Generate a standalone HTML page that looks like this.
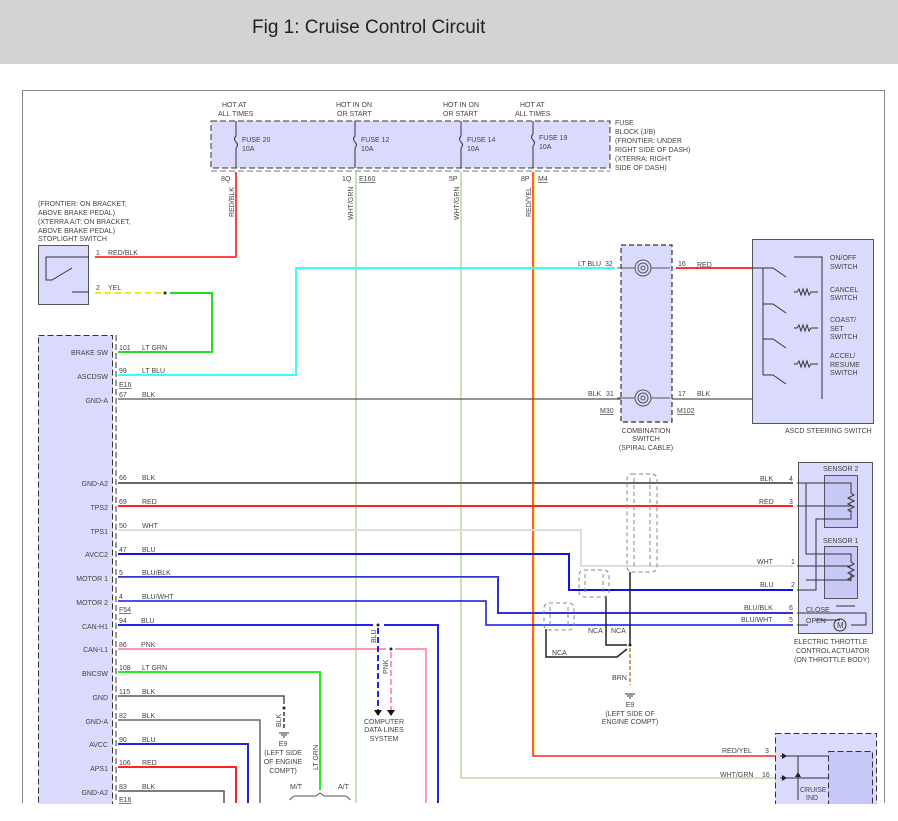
<!DOCTYPE html>
<html><head><meta charset="utf-8"><style>
html,body{margin:0;padding:0;background:#fff;width:898px;height:821px;overflow:hidden}
.hdr{position:absolute;left:0;top:0;width:898px;height:64px;background:#d3d3d3}
.hdr span{position:absolute;left:252px;top:17px;font-family:"Liberation Sans",sans-serif;font-size:19px;color:#222}
svg{position:absolute;left:0;top:0}
text{font-family:"Liberation Sans",sans-serif;font-size:7px;fill:#444}
</style></head><body>
<div class="hdr"><span>Fig 1: Cruise Control Circuit</span></div>
<svg width="898" height="821" viewBox="0 0 898 821">
<path d="M22.5 803V90.5H884.5V803" fill="none" stroke="#888" stroke-width="1"/>
<rect x="211" y="121" width="399" height="47" fill="#dadafc" stroke="#333" stroke-dasharray="6,3"/>
<path d="M211 171H610" stroke="#777" stroke-dasharray="6,3"/>
<g stroke="#333" fill="none">
<path d="M236 121V136q-3 3 0 6q3 3 0 6V168"/>
<path d="M355 121V136q-3 3 0 6q3 3 0 6V168"/>
<path d="M461 121V136q-3 3 0 6q3 3 0 6V168"/>
<path d="M533 121V134q-3 3 0 6q3 3 0 6V168"/>
</g>
<g>
<text x="222" y="107">HOT AT</text><text x="218" y="116">ALL TIMES</text>
<text x="336" y="107">HOT IN ON</text><text x="337" y="116">OR START</text>
<text x="443" y="107">HOT IN ON</text><text x="443" y="116">OR START</text>
<text x="520" y="107">HOT AT</text><text x="515" y="116">ALL TIMES</text>
<text x="242" y="142">FUSE 20</text><text x="242" y="151">10A</text>
<text x="361" y="142">FUSE 12</text><text x="361" y="151">10A</text>
<text x="467" y="142">FUSE 14</text><text x="467" y="151">10A</text>
<text x="539" y="140">FUSE 19</text><text x="539" y="149">10A</text>
<text x="615" y="125">FUSE</text><text x="615" y="134">BLOCK (J/B)</text><text x="615" y="143">(FRONTIER: UNDER</text><text x="615" y="152">RIGHT SIDE OF DASH)</text><text x="615" y="161">(XTERRA: RIGHT</text><text x="615" y="170">SIDE OF DASH)</text>
<text x="221" y="181">8Q</text><text x="342" y="181">1Q</text><text x="359" y="181" text-decoration="underline">E160</text>
<text x="449" y="181">5P</text><text x="521" y="181">8P</text><text x="538" y="181" text-decoration="underline">M4</text>
<text transform="translate(234,217) rotate(-90)">RED/BLK</text>
<text transform="translate(353,220) rotate(-90)">WHT/GRN</text>
<text transform="translate(459,220) rotate(-90)">WHT/GRN</text>
<text transform="translate(531,217) rotate(-90)">RED/YEL</text>
</g>
<path d="M236 172V257H95" stroke="#f44" stroke-width="2" fill="none"/>
<path d="M356 172V803" stroke="#c4e0b4" stroke-width="2"/>
<path d="M461 172V778H775" stroke="#b8d8a0" stroke-width="1.5" fill="none"/>
<path d="M533 172V756H775" stroke="#f22" stroke-width="1.5" fill="none"/>
<path d="M534.5 172V755" stroke="#ee6" stroke-width="1"/>
<text x="38" y="206">(FRONTIER: ON BRACKET,</text><text x="38" y="215">ABOVE BRAKE PEDAL)</text><text x="38" y="224">(XTERRA A/T: ON BRACKET,</text><text x="38" y="233">ABOVE BRAKE PEDAL)</text><text x="38" y="241">STOPLIGHT SWITCH</text>
<rect x="38.5" y="245.5" width="50" height="59" fill="#dadafc" stroke="#555"/>
<path d="M89 257H46V280H52L72 268M72 292H89" stroke="#333" fill="none"/>
<text x="96" y="255">1</text><text x="108" y="255">RED/BLK</text>
<text x="96" y="290">2</text><text x="108" y="290">YEL</text>
<path d="M95 293H163" stroke="#ee0" stroke-width="2" stroke-dasharray="6,4"/>
<circle cx="165" cy="293" r="1.5" fill="#222"/>
<path d="M170 293H212V352H118" stroke="#2d2" stroke-width="2" fill="none"/>
<rect x="38.5" y="335.5" width="74" height="470" fill="#dadafc" stroke="#333" stroke-dasharray="6,3"/>
<path d="M116 335V803" stroke="#333" stroke-dasharray="6,3"/>
<g text-anchor="end">
<text x="108" y="355">BRAKE SW</text><text x="108" y="379">ASCDSW</text><text x="108" y="403">GND-A</text>
<text x="108" y="486">GND-A2</text><text x="108" y="510">TPS2</text><text x="108" y="534">TPS1</text><text x="108" y="557">AVCC2</text>
<text x="108" y="581">MOTOR 1</text><text x="108" y="605">MOTOR 2</text><text x="108" y="629">CAN-H1</text><text x="108" y="652">CAN-L1</text>
<text x="108" y="676">BNCSW</text><text x="108" y="700">GND</text><text x="108" y="724">GND-A</text><text x="108" y="747">AVCC</text>
<text x="108" y="771">APS1</text><text x="108" y="795">GND-A2</text>
</g>
<g>
<text x="119" y="350">101</text><text x="142" y="350">LT GRN</text>
<text x="119" y="373">99</text><text x="142" y="373">LT BLU</text><text x="119" y="387" text-decoration="underline">E16</text>
<text x="119" y="397">67</text><text x="142" y="397">BLK</text>
<text x="119" y="480">66</text><text x="142" y="480">BLK</text>
<text x="119" y="504">69</text><text x="142" y="504">RED</text>
<text x="119" y="528">50</text><text x="142" y="528">WHT</text>
<text x="119" y="552">47</text><text x="142" y="552">BLU</text>
<text x="119" y="575">5</text><text x="142" y="575">BLU/BLK</text>
<text x="119" y="599">4</text><text x="142" y="599">BLU/WHT</text><text x="119" y="612" text-decoration="underline">F54</text>
<text x="119" y="623">94</text><text x="141" y="623">BLU</text>
<text x="119" y="647">86</text><text x="141" y="647">PNK</text>
<text x="119" y="670">108</text><text x="142" y="670">LT GRN</text>
<text x="119" y="694">115</text><text x="142" y="694">BLK</text>
<text x="119" y="718">82</text><text x="142" y="718">BLK</text>
<text x="119" y="742">90</text><text x="142" y="742">BLU</text>
<text x="119" y="765">106</text><text x="142" y="765">RED</text>
<text x="119" y="789">83</text><text x="142" y="789">BLK</text><text x="119" y="802" text-decoration="underline">E16</text>
</g>
<path d="M118 375H296V268H615" stroke="#3ff" stroke-width="2" fill="none"/>
<path d="M118 399H822V257H800" stroke="#555" stroke-width="1.2" fill="none"/>
<path d="M118 483H793" stroke="#666" stroke-width="2"/>
<path d="M118 506H793" stroke="#f22" stroke-width="2"/>
<path d="M118 530H581V566H793" stroke="#ddd" stroke-width="2" fill="none"/>
<path d="M118 554H569V590H793" stroke="#11e" stroke-width="2" fill="none"/>
<path d="M118 577H498V613H793" stroke="#33c" stroke-width="2" fill="none"/>
<path d="M118 577.5H498" stroke="#99f" stroke-width="0.6"/>
<path d="M118 601H486V625H793" stroke="#11e" stroke-width="1.5" fill="none"/>
<path d="M118 625H373M384 625H438V803" stroke="#22e" stroke-width="2" fill="none"/>
<path d="M118 649H386M395 649H426V803" stroke="#f9a" stroke-width="2" fill="none"/>
<circle cx="378" cy="625" r="1.5" fill="#222"/><circle cx="391" cy="649" r="1.5" fill="#222"/>
<path d="M378 628V710" stroke="#22e" stroke-width="2" stroke-dasharray="6,3"/>
<path d="M391 652V710" stroke="#f9a" stroke-width="2" stroke-dasharray="6,3"/>
<path d="M374 710h8l-4 6zM387 710h8l-4 6z" fill="#111"/>
<text transform="translate(376,643) rotate(-90)">BLU</text>
<text transform="translate(388,674) rotate(-90)">PNK</text>
<text x="384" y="724" text-anchor="middle">COMPUTER</text><text x="384" y="732" text-anchor="middle">DATA LINES</text><text x="384" y="741" text-anchor="middle">SYSTEM</text>
<path d="M118 672H320V790" stroke="#2e2" stroke-width="2" fill="none"/>
<text transform="translate(318,770) rotate(-90)">LT GRN</text>
<path d="M118 696H284V704" stroke="#555" stroke-width="1.5" fill="none"/>
<circle cx="284" cy="708" r="1.5" fill="#222"/>
<path d="M284 712V730" stroke="#333" stroke-width="1.5" stroke-dasharray="4,2"/>
<path d="M279 733h10M281 735h6M283 737h2" stroke="#333"/>
<text transform="translate(281,727) rotate(-90)">BLK</text>
<text x="283" y="746" text-anchor="middle">E9</text><text x="283" y="755" text-anchor="middle">(LEFT SIDE</text><text x="283" y="764" text-anchor="middle">OF ENGINE</text><text x="283" y="773" text-anchor="middle">COMPT)</text>
<path d="M118 720H260V803" stroke="#666" stroke-width="1.5" fill="none"/>
<path d="M118 744H248V803" stroke="#22e" stroke-width="2" fill="none"/>
<path d="M118 767H236V803" stroke="#f22" stroke-width="2" fill="none"/>
<path d="M118 791H224V803" stroke="#555" stroke-width="1.5" fill="none"/>
<text x="290" y="789">M/T</text><text x="338" y="789">A/T</text>
<path d="M290 800q2-4 6-4h20l4-3 4 3h20q4 0 6 4" stroke="#555" fill="none"/>
<rect x="621" y="245" width="51" height="177" fill="#dadafc" stroke="#333" stroke-width="1.2" stroke-dasharray="5,3"/>
<g stroke="#555" fill="none">
<circle cx="643" cy="268" r="8"/><circle cx="643" cy="268" r="5"/><circle cx="643" cy="268" r="2"/>
<circle cx="643" cy="398" r="8"/><circle cx="643" cy="398" r="5"/><circle cx="643" cy="398" r="2"/>
<path d="M617 268H635M651 268H670M617 398H635M651 398H670"/>
</g>
<path d="M676 268H752" stroke="#f33" stroke-width="2"/>
<text x="578" y="266">LT BLU</text><text x="605" y="266">32</text><text x="678" y="266">16</text><text x="697" y="267">RED</text>
<text x="588" y="396">BLK</text><text x="606" y="396">31</text><text x="678" y="396">17</text><text x="697" y="396">BLK</text>
<text x="600" y="413" text-decoration="underline">M30</text><text x="677" y="413" text-decoration="underline">M102</text>
<text x="646" y="433" text-anchor="middle">COMBINATION</text><text x="646" y="441" text-anchor="middle">SWITCH</text><text x="646" y="450" text-anchor="middle">(SPIRAL CABLE)</text>
<rect x="752.5" y="239.5" width="121" height="184" fill="#dadafc" stroke="#555"/>
<g stroke="#333" fill="none">
<path d="M763 268V375M752 268H773l13 9M763 304H773l13 9M763 339H773l13 9M763 375H773l13 9"/>
<path d="M794 257H822V399M794 292h3l2-3 2 6 2-6 2 6 2-6 2 6 2-3h7M794 328h3l2-3 2 6 2-6 2 6 2-6 2 6 2-3h7M794 364h3l2-3 2 6 2-6 2 6 2-6 2 6 2-3h7"/>
</g>
<text x="830" y="260">ON/OFF</text><text x="830" y="269">SWITCH</text>
<text x="830" y="292">CANCEL</text><text x="830" y="300">SWITCH</text>
<text x="830" y="322">COAST/</text><text x="830" y="331">SET</text><text x="830" y="339">SWITCH</text>
<text x="830" y="358">ACCEL/</text><text x="830" y="367">RESUME</text><text x="830" y="375">SWITCH</text>
<text x="785" y="433">ASCD STEERING SWITCH</text>
<g stroke="#888" fill="none" stroke-dasharray="4,3">
<rect x="627" y="474" width="30" height="98" rx="5"/>
<path d="M634 478V568M650 478V568"/>
<rect x="579" y="570" width="30" height="27" rx="5"/>
<path d="M585 574V593M603 574V593"/>
<rect x="544" y="603" width="30" height="27" rx="5"/>
<path d="M550 607V626M568 607V626"/>
</g>
<g stroke="#222" stroke-width="1.5" fill="none">
<path d="M630 572V645M606 597V645H627M546 629V657H617l10-8"/>
</g>
<circle cx="630" cy="645" r="1.5" fill="#222"/>
<path d="M630 648V685" stroke="#a88a30" stroke-width="1.5" stroke-dasharray="4,2"/>
<path d="M625 694h10M627 696h6M629 698h2" stroke="#333"/>
<text x="588" y="633">NCA</text><text x="611" y="633">NCA</text><text x="552" y="655">NCA</text>
<text x="612" y="680">BRN</text>
<text x="630" y="707" text-anchor="middle">E9</text><text x="630" y="716" text-anchor="middle">(LEFT SIDE OF</text><text x="630" y="724" text-anchor="middle">ENGINE COMPT)</text>
<rect x="798.5" y="462.5" width="74" height="171" fill="#dadafc" stroke="#555"/>
<rect x="824.5" y="475.5" width="33" height="52" fill="#c8c8f8" stroke="#555"/>
<rect x="824.5" y="546.5" width="33" height="52" fill="#c8c8f8" stroke="#555"/>
<text x="823" y="471">SENSOR 2</text><text x="823" y="543">SENSOR 1</text>
<g stroke="#333" fill="none">
<path d="M797 483H851V493M797 506H851M797 566H851M797 590H816V519H851V510M806 483V554H851V562M851 573V580H806"/>
<path d="M851 493l3 2-6 3 6 3-6 3 6 3-6 3 3 2M851 562l3 2-6 3 6 3-6 3 6 3-6 3 3 2"/>
<path d="M797 613H866V625H851M797 625H808M836 606H855M816 620H840"/>
<circle cx="840" cy="625" r="6"/>
</g>
<text x="837" y="628" style="font-size:8px">M</text>
<text x="806" y="612">CLOSE</text><text x="806" y="623">OPEN</text>
<text x="760" y="481">BLK</text><text x="789" y="481">4</text>
<text x="759" y="504">RED</text><text x="789" y="504">3</text>
<text x="757" y="564">WHT</text><text x="791" y="564">1</text>
<text x="760" y="587">BLU</text><text x="791" y="587">2</text>
<text x="744" y="610">BLU/BLK</text><text x="789" y="610">6</text>
<text x="741" y="622">BLU/WHT</text><text x="789" y="622">5</text>
<text x="794" y="644">ELECTRIC THROTTLE</text><text x="796" y="653">CONTROL ACTUATOR</text><text x="794" y="662">(ON THROTTLE BODY)</text>
<rect x="775.5" y="733.5" width="101" height="75" fill="#dadafc" stroke="#333" stroke-dasharray="6,3"/>
<rect x="828.5" y="751.5" width="44" height="60" fill="#c8c8f8" stroke="#333" stroke-dasharray="6,3"/>
<g stroke="#333" fill="none"><path d="M780 756H828M780 778H828M798 756V800"/></g>
<path d="M782 753v6l5-3zM782 775v6l5-3zM795 777h6l-3-5z" fill="#222"/>
<text x="722" y="753">RED/YEL</text><text x="765" y="753">3</text>
<text x="720" y="777">WHT/GRN</text><text x="762" y="777">16</text>
<text x="800" y="792">CRUISE</text><text x="806" y="800">IND</text>
<rect x="0" y="804" width="898" height="17" fill="#fff"/>
</svg>
</body></html>
